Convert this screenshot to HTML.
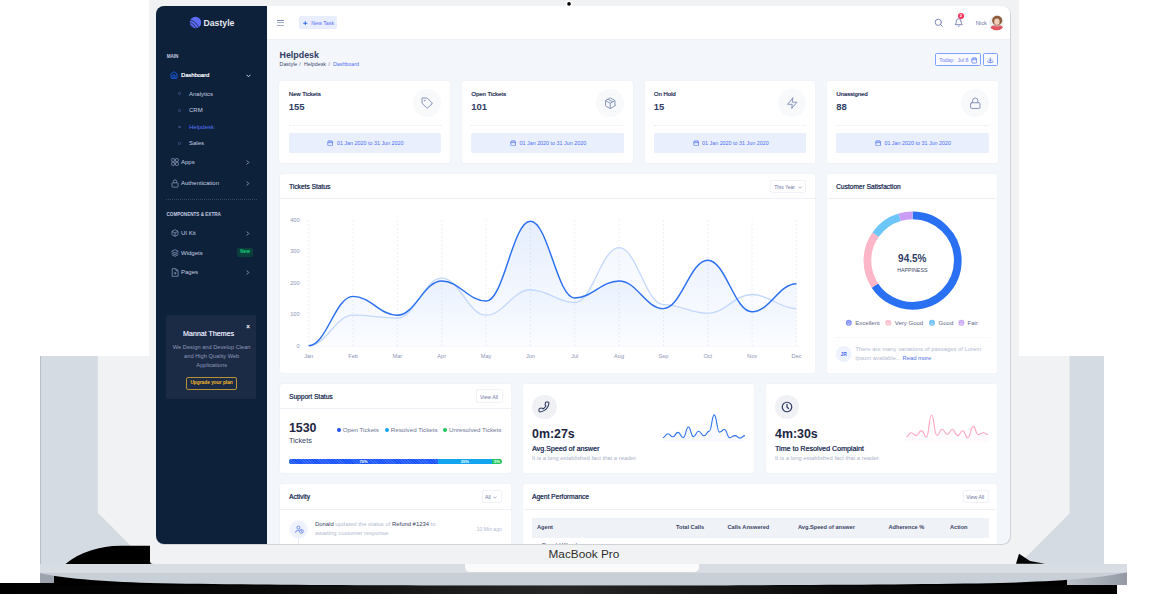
<!DOCTYPE html>
<html><head><meta charset="utf-8">
<style>
*{box-sizing:border-box;margin:0;padding:0}
html,body{width:1175px;height:594px;overflow:hidden;background:#fff}
body{position:relative;font-family:"Liberation Sans",sans-serif;color:#303e67}
.a{position:absolute}
.t{position:absolute;white-space:nowrap;line-height:1}
#scrb{position:absolute;left:155.5px;top:5.5px;width:855px;height:539px;border-radius:8.5px;background:#cfd3d8}
#screen{position:absolute;left:0;top:0;width:1175px;height:594px;clip-path:inset(6px 165px 50px 156px round 8px);background:#f3f6fa}
#side{position:absolute;left:156px;top:6px;width:111px;height:538px;background:#0d213a}
#top{position:absolute;left:267px;top:6px;width:743px;height:34px;background:#fff;border-bottom:1px solid #edf0f5}
.card{position:absolute;background:#fff;border-radius:2.5px;box-shadow:0 0 2px rgba(40,50,80,.06)}
</style></head><body>
<!-- laptop base -->
<svg class="a" style="left:0;top:0" width="1175" height="594" viewBox="0 0 1175 594">
  <rect x="149" y="0" width="870" height="356" fill="#f1f2f4"/>
  <rect x="40" y="356" width="1064" height="208" fill="#d5dbe2"/>
  <rect x="40" y="356" width="1" height="208" fill="#b9c0c8"/>
  <polygon points="97.8,356 1069.5,356 1069.5,513.5 1019,564 149,564 97.8,512.8" fill="#f1f2f4"/>
  <path d="M65.5,564 C80,552 100,546 120,545.8 L150,545.8 L150,561 Q150,564 153,564 Z" fill="#000"/>
  <path d="M1019,553.8 L1016,563.7 L1045,563.7 L1030,561 Z" fill="#000"/>
  <rect x="54" y="574" width="1013" height="12" fill="#000"/>
  <defs><linearGradient id="bk" x1="0" x2="1" y1="0" y2="0"><stop offset="0" stop-color="#000"/><stop offset="0.25" stop-color="#0a0a0a"/><stop offset="0.5" stop-color="#262626"/><stop offset="0.75" stop-color="#0a0a0a"/><stop offset="1" stop-color="#000"/></linearGradient></defs>
  <rect x="0" y="583" width="1117" height="11" fill="url(#bk)"/>
  <rect x="54" y="583" width="1013" height="2.5" fill="#000"/>
  <rect x="40" y="564" width="1087" height="8" fill="#d8dde3"/>
  <rect x="40" y="572" width="14" height="11" fill="#9ea4ad"/>
  <defs><linearGradient id="ft" x1="0" x2="1"><stop offset="0" stop-color="#bcc1c8"/><stop offset="1" stop-color="#949aa4"/></linearGradient></defs><rect x="1067" y="572" width="60" height="13" fill="url(#ft)"/>
  <path d="M40,572 L1127,572 C1105,577.5 1065,581 1000,583 C900,585 700,585.5 583,585.5 C400,585.5 250,585 150,583 C100,581.5 60,578 40,573 Z" fill="#c8cfd7"/>
  <rect x="40" y="571.6" width="1087" height="0.8" fill="#e3e7eb"/>
  <path d="M465,564 L699,564 L699,567 Q699,572 693,572 L471,572 Q465,572 465,567 Z" fill="#fbfbfc"/>
  <circle cx="569" cy="3.9" r="3" fill="#fff"/>
  <circle cx="569" cy="3.9" r="1.8" fill="#000"/>
</svg>
<div class="t" style="left:548.5px;top:548.5px;font-size:11.8px;color:#2a2a2a;text-shadow:0 0 2px #fff">MacBook Pro</div>

<div id="scrb"></div>
<div id="screen">
  <div id="side"></div>
  <svg class="a" style="left:189.1px;top:16.4px" width="13" height="13" viewBox="0 0 13 13">
    <defs><clipPath id="lg"><circle cx="6.5" cy="6.5" r="5.7"/></clipPath></defs>
    <circle cx="6.5" cy="6.5" r="5.7" fill="#5d6cf6"/>
    <g clip-path="url(#lg)" fill="none" stroke="#0d213a" stroke-width="0.75">
      <circle cx="-1" cy="15" r="6.22"/>
      <circle cx="-1" cy="15" r="8.57"/>
      <circle cx="-1" cy="15" r="11.23"/>
    </g>
  </svg>
  <div class="t" style="left:203.5px;top:18.6px;font-size:8.7px;font-weight:bold;color:#e6e9f0">Dastyle</div>
  <div class="t" style="left:166.7px;top:55px;font-size:4.6px;font-weight:bold;color:#c3cbe0">MAIN</div>
  <svg class="a" style="left:170.3px;top:71.3px" width="8" height="8" viewBox="0 0 24 24"><path d="M3 9l9-7 9 7v11a2 2 0 0 1-2 2H5a2 2 0 0 1-2-2z M9 22V12h6v10" fill="none" stroke="#1d63f6" stroke-width="2.6" stroke-linejoin="round"/></svg>
  <div class="t" style="left:181px;top:72.9px;font-size:5.75px;font-weight:normal;color:#eef1f8;text-shadow:0.3px 0 0 #eef1f8">Dashboard</div>
  <svg class="a" style="left:245.5px;top:73.5px" width="5" height="3.5" viewBox="0 0 10 7"><path d="M1 1.5 L5 5.5 L9 1.5" fill="none" stroke="#e3e7f1" stroke-width="1.8"/></svg>
  <div class="a" style="left:178.2px;top:92.4px;width:2.6px;height:2.6px;border:0.7px solid #3d4f86;border-radius:50%"></div>
  <div class="t" style="left:189px;top:90.9px;font-size:6px;color:#c6cde0">Analytics</div>
  <div class="a" style="left:178.2px;top:109px;width:2.6px;height:2.6px;border:0.7px solid #3d4f86;border-radius:50%"></div>
  <div class="t" style="left:189px;top:107.4px;font-size:6px;color:#c6cde0">CRM</div>
  <div class="a" style="left:178.2px;top:125.6px;width:2.6px;height:2.6px;border:0.7px solid #3d4f86;border-radius:50%"></div>
  <div class="t" style="left:189px;top:123.9px;font-size:6px;color:#5571f6">Helpdesk</div>
  <div class="a" style="left:178.2px;top:142px;width:2.6px;height:2.6px;border:0.7px solid #3d4f86;border-radius:50%"></div>
  <div class="t" style="left:189px;top:140.2px;font-size:6px;color:#c6cde0">Sales</div>
  <svg class="a" style="left:170.5px;top:158px" width="8" height="8" viewBox="0 0 24 24"><g fill="none" stroke="#8e9ac0" stroke-width="2.2"><rect x="2" y="2" width="8.5" height="8.5" rx="1.5"/><rect x="13.5" y="2" width="8.5" height="8.5" rx="1.5"/><rect x="2" y="13.5" width="8.5" height="8.5" rx="1.5"/><rect x="13.5" y="13.5" width="8.5" height="8.5" rx="1.5"/></g></svg>
  <div class="t" style="left:181px;top:159.2px;font-size:6px;color:#c6cde0">Apps</div>
  <svg class="a" style="left:246px;top:160px" width="3.5" height="5" viewBox="0 0 7 10"><path d="M1.5 1 L5.5 5 L1.5 9" fill="none" stroke="#aab3cc" stroke-width="1.6"/></svg>
  <svg class="a" style="left:170.5px;top:178.5px" width="8" height="9" viewBox="0 0 24 26"><g fill="none" stroke="#8e9ac0" stroke-width="2.2"><rect x="3" y="11" width="18" height="13" rx="2"/><path d="M7 11 V7 a5 5 0 0 1 10 0 V11"/></g></svg>
  <div class="t" style="left:181px;top:180.2px;font-size:6px;color:#c6cde0">Authentication</div>
  <svg class="a" style="left:246px;top:181px" width="3.5" height="5" viewBox="0 0 7 10"><path d="M1.5 1 L5.5 5 L1.5 9" fill="none" stroke="#aab3cc" stroke-width="1.6"/></svg>
  <div class="a" style="left:166px;top:199px;width:91px;height:0;border-top:0.7px dotted #34466a"></div>
  <div class="t" style="left:166.5px;top:212.6px;font-size:4.6px;font-weight:bold;color:#c3cbe0">COMPONENTS &amp; EXTRA</div>
  <svg class="a" style="left:170.5px;top:228.5px" width="8" height="8" viewBox="0 0 24 24"><g fill="none" stroke="#8e9ac0" stroke-width="2.2" stroke-linejoin="round"><path d="M12 2 L21 7 V17 L12 22 L3 17 V7 Z"/><path d="M3 7 L12 12 L21 7 M12 12 V22"/></g></svg>
  <div class="t" style="left:181px;top:229.8px;font-size:6px;color:#c6cde0">UI Kit</div>
  <svg class="a" style="left:246px;top:230.5px" width="3.5" height="5" viewBox="0 0 7 10"><path d="M1.5 1 L5.5 5 L1.5 9" fill="none" stroke="#aab3cc" stroke-width="1.6"/></svg>
  <svg class="a" style="left:170.5px;top:249px" width="8" height="8" viewBox="0 0 24 24"><g fill="none" stroke="#8e9ac0" stroke-width="2.2" stroke-linejoin="round"><path d="M12 2 L22 7 L12 12 L2 7 Z"/><path d="M2 12 L12 17 L22 12 M2 17 L12 22 L22 17"/></g></svg>
  <div class="t" style="left:181px;top:250.2px;font-size:6px;color:#c6cde0">Widgets</div>
  <div class="a" style="left:237.4px;top:248.2px;width:15.6px;height:8.7px;border-radius:2px;background:#0b3f3b"></div>
  <div class="t" style="left:240.2px;top:250.2px;font-size:4.7px;font-weight:bold;color:#14d17a">New</div>
  <svg class="a" style="left:170.5px;top:268px" width="8" height="9" viewBox="0 0 22 26"><g fill="none" stroke="#8e9ac0" stroke-width="2.2" stroke-linejoin="round"><path d="M3 2 H14 L20 8 V24 H3 Z"/><path d="M14 2 V8 H20 M8 15 H15 M11.5 11.5 V18.5"/></g></svg>
  <div class="t" style="left:181px;top:269.4px;font-size:6px;color:#c6cde0">Pages</div>
  <svg class="a" style="left:246px;top:270px" width="3.5" height="5" viewBox="0 0 7 10"><path d="M1.5 1 L5.5 5 L1.5 9" fill="none" stroke="#aab3cc" stroke-width="1.6"/></svg>
  <div class="a" style="left:166.3px;top:314.5px;width:90px;height:84px;border-radius:2px;background:#1b2b45"></div>
  <div class="t" style="left:246.2px;top:324.2px;font-size:6.3px;font-weight:bold;color:#fff">&#215;</div>
  <div class="t" style="left:182.9px;top:330.6px;font-size:7.1px;color:#d7dded;text-shadow:0.2px 0 0 #d7dded">Mannat Themes</div>
  <div class="a" style="left:166.3px;width:90px;text-align:center;top:343.2px;font-size:5.7px;line-height:9.1px;color:#8d99bb;margin-left:0.4px">We Design and Develop Clean<br>and High Quality Web<br>Applications</div>
  <div class="a" style="left:186.3px;top:376.6px;width:50.6px;height:13.6px;border:0.75px solid #b99436;border-radius:2px"></div>
  <div class="t" style="left:186.3px;width:50.6px;text-align:center;top:381.4px;font-size:4.8px;font-weight:bold;color:#f5b82a">Upgrade your plan</div>
  <div id="top"></div>
  <div class="a" style="left:276.8px;top:19.9px;width:7.4px;height:0.8px;background:#7d89b8"></div>
  <div class="a" style="left:276.8px;top:22.3px;width:7.4px;height:0.8px;background:#a3acca"></div>
  <div class="a" style="left:276.8px;top:24.9px;width:7.4px;height:0.8px;background:#a3acca"></div>
  <div class="a" style="left:299.3px;top:16.3px;width:37.7px;height:12.7px;border-radius:1.5px;background:#e8eefd"></div>
  <svg class="a" style="left:303px;top:20.6px" width="4.6" height="4.6" viewBox="0 0 10 10"><path d="M5 0.5V9.5M0.5 5H9.5" stroke="#2563eb" stroke-width="2"/></svg>
  <div class="t" style="left:311.2px;top:21px;font-size:5.3px;color:#5a6ff0">New Task</div>
  <svg class="a" style="left:934px;top:18.4px" width="9.4" height="9.4" viewBox="0 0 24 24"><g fill="none" stroke="#6b78ad" stroke-width="2.2" stroke-linecap="round"><circle cx="11" cy="11" r="8"/><path d="M21 21l-4.35-4.35"/></g></svg>
  <svg class="a" style="left:953.6px;top:18.4px" width="9.4" height="9.4" viewBox="0 0 24 24"><g fill="none" stroke="#6b78ad" stroke-width="2.2" stroke-linecap="round" stroke-linejoin="round"><path d="M18 8A6 6 0 0 0 6 8c0 7-3 9-3 9h18s-3-2-3-9"/><path d="M13.73 21a2 2 0 0 1-3.46 0"/></g></svg>
  <div class="a" style="left:958.3px;top:12.6px;width:6.2px;height:6.2px;border-radius:50%;background:#f5325c"></div>
  <div class="t" style="left:959.8px;top:13.6px;font-size:4px;font-weight:bold;color:#fff">2</div>
  <div class="t" style="left:975.7px;top:20.6px;font-size:5.8px;color:#6d78a6">Nick</div>
  <svg class="a" style="left:988.6px;top:15.4px" width="15.4" height="15.4" viewBox="0 0 20 20">
    <defs><clipPath id="av"><circle cx="10" cy="10" r="10"/></clipPath></defs>
    <g clip-path="url(#av)"><rect width="20" height="20" fill="#eef0f2"/>
    <ellipse cx="10.6" cy="7.3" rx="6.6" ry="6.3" fill="#8e5d3e"/>
    <path d="M0.5 20 Q0.5 13.6 10 12.8 Q19.5 13.6 19.5 20Z" fill="#e05560"/>
    <path d="M5.8 13.4 Q10 15.6 14.2 13.4" fill="none" stroke="#c9c9cc" stroke-width="1.1"/>
    <ellipse cx="10.3" cy="8.8" rx="3.5" ry="4.1" fill="#efcdb6"/></g>
  </svg>
  <div class="t" style="left:279.5px;top:51.2px;font-size:8.9px;font-weight:bold;color:#2f3b63">Helpdesk</div>
  <div class="t" style="left:279.6px;top:61.6px;font-size:5.3px;color:#3f4a70">Dastyle</div><div class="t" style="left:299.3px;top:61.6px;font-size:5.3px;color:#6c7595">/</div><div class="t" style="left:303.9px;top:61.6px;font-size:5.3px;color:#3f4a70">Helpdesk</div><div class="t" style="left:328.6px;top:61.6px;font-size:5.3px;color:#6c7595">/</div><div class="t" style="left:333px;top:61.6px;font-size:5.3px;color:#4f6ff5">Dashboard</div>
  <div class="a" style="left:935.2px;top:53.1px;width:46.2px;height:13.4px;border:0.7px solid #7ea1fb;border-radius:1.5px;background:#f8faff"></div>
  <div class="t" style="left:939.3px;top:57.9px;font-size:5.2px;color:#6e7ff3">Today:&nbsp; Jul 8</div>
  <svg class="a" style="left:970.5px;top:57px" width="6.6" height="6.6" viewBox="0 0 24 24"><g fill="none" stroke="#4e6ff5" stroke-width="2.6" stroke-linejoin="round"><rect x="3" y="4" width="18" height="18" rx="4"/><path d="M3 10h18M8 2v4M16 2v4"/></g></svg>
  <div class="a" style="left:983.3px;top:53.1px;width:14.3px;height:13.4px;border:0.7px solid #7ea1fb;border-radius:1.5px;background:#f8faff"></div>
  <svg class="a" style="left:987.3px;top:56.6px" width="6.6" height="6.6" viewBox="0 0 24 24"><g fill="none" stroke="#4e6ff5" stroke-width="2.8" stroke-linecap="round" stroke-linejoin="round"><path d="M3 15v2a3 3 0 0 0 3 3h12a3 3 0 0 0 3-3v-2M7 10l5 5 5-5M12 15V3"/></g></svg>
  <div class="card" style="left:279.4px;top:80.7px;width:170.7px;height:82.2px"></div>
  <div class="t" style="left:288.7px;top:91.8px;font-size:5.95px;font-weight:normal;color:#2f3a5e;text-shadow:0.3px 0 0 #2f3a5e">New Tickets</div>
  <div class="t" style="left:288.7px;top:102.4px;font-size:9.5px;font-weight:bold;color:#303e67">155</div>
  <div class="a" style="left:413.2px;top:89.3px;width:28.2px;height:28.2px;border-radius:50%;background:#f8f9fb"></div>
  <svg class="a" style="left:421.09999999999997px;top:97.2px" width="12.5" height="12.5" viewBox="0 0 24 24"><g fill="none" stroke="#8793b8" stroke-width="1.9" stroke-linecap="round" stroke-linejoin="round"><path d="M20.59 13.41l-7.17 7.17a2 2 0 0 1-2.83 0L2 12V2h10l8.59 8.59a2 2 0 0 1 0 2.82z"/><circle cx="7" cy="7" r="0.5"/></g></svg>
  <div class="a" style="left:288.7px;top:124.8px;width:152.7px;border-top:0.6px dotted #e6e9ef"></div>
  <div class="a" style="left:288.7px;top:133.1px;width:152.7px;height:20.4px;border-radius:1.5px;background:#e9effd"></div>
  <svg class="a" style="left:327.4px;top:140px" width="6.3" height="6.3" viewBox="0 0 24 24"><g fill="none" stroke="#4e6ff5" stroke-width="2.6" stroke-linejoin="round"><rect x="3" y="4" width="18" height="18" rx="3"/><path d="M3 10h18M8 2v4M16 2v4"/></g></svg>
  <div class="t" style="left:336.9px;top:140.9px;font-size:5.38px;color:#4e6ff5">01 Jan 2020 to 31 Jun 2020</div>
  <div class="card" style="left:462px;top:80.7px;width:170.7px;height:82.2px"></div>
  <div class="t" style="left:471.3px;top:91.8px;font-size:5.95px;font-weight:normal;color:#2f3a5e;text-shadow:0.3px 0 0 #2f3a5e">Open Tickets</div>
  <div class="t" style="left:471.3px;top:102.4px;font-size:9.5px;font-weight:bold;color:#303e67">101</div>
  <div class="a" style="left:595.8px;top:89.3px;width:28.2px;height:28.2px;border-radius:50%;background:#f8f9fb"></div>
  <svg class="a" style="left:603.7px;top:97.2px" width="12.5" height="12.5" viewBox="0 0 24 24"><g fill="none" stroke="#8793b8" stroke-width="1.9" stroke-linecap="round" stroke-linejoin="round"><path d="M21 16V8a2 2 0 0 0-1-1.73l-7-4a2 2 0 0 0-2 0l-7 4A2 2 0 0 0 3 8v8a2 2 0 0 0 1 1.73l7 4a2 2 0 0 0 2 0l7-4A2 2 0 0 0 21 16z"/><path d="M3.27 6.96L12 12.01l8.73-5.05M12 22.08V12M16.5 9.4L7.5 4.21"/></g></svg>
  <div class="a" style="left:471.3px;top:124.8px;width:152.7px;border-top:0.6px dotted #e6e9ef"></div>
  <div class="a" style="left:471.3px;top:133.1px;width:152.7px;height:20.4px;border-radius:1.5px;background:#e9effd"></div>
  <svg class="a" style="left:510px;top:140px" width="6.3" height="6.3" viewBox="0 0 24 24"><g fill="none" stroke="#4e6ff5" stroke-width="2.6" stroke-linejoin="round"><rect x="3" y="4" width="18" height="18" rx="3"/><path d="M3 10h18M8 2v4M16 2v4"/></g></svg>
  <div class="t" style="left:519.5px;top:140.9px;font-size:5.38px;color:#4e6ff5">01 Jan 2020 to 31 Jun 2020</div>
  <div class="card" style="left:644.5px;top:80.7px;width:170.7px;height:82.2px"></div>
  <div class="t" style="left:653.8px;top:91.8px;font-size:5.95px;font-weight:normal;color:#2f3a5e;text-shadow:0.3px 0 0 #2f3a5e">On Hold</div>
  <div class="t" style="left:653.8px;top:102.4px;font-size:9.5px;font-weight:bold;color:#303e67">15</div>
  <div class="a" style="left:778.3px;top:89.3px;width:28.2px;height:28.2px;border-radius:50%;background:#f8f9fb"></div>
  <svg class="a" style="left:786.2px;top:97.2px" width="12.5" height="12.5" viewBox="0 0 24 24"><g fill="none" stroke="#8793b8" stroke-width="1.9" stroke-linecap="round" stroke-linejoin="round"><path d="M13 2L3 14h9l-1 8 10-12h-9l1-8z"/></g></svg>
  <div class="a" style="left:653.8px;top:124.8px;width:152.7px;border-top:0.6px dotted #e6e9ef"></div>
  <div class="a" style="left:653.8px;top:133.1px;width:152.7px;height:20.4px;border-radius:1.5px;background:#e9effd"></div>
  <svg class="a" style="left:692.5px;top:140px" width="6.3" height="6.3" viewBox="0 0 24 24"><g fill="none" stroke="#4e6ff5" stroke-width="2.6" stroke-linejoin="round"><rect x="3" y="4" width="18" height="18" rx="3"/><path d="M3 10h18M8 2v4M16 2v4"/></g></svg>
  <div class="t" style="left:702.0px;top:140.9px;font-size:5.38px;color:#4e6ff5">01 Jan 2020 to 31 Jun 2020</div>
  <div class="card" style="left:826.9px;top:80.7px;width:170.7px;height:82.2px"></div>
  <div class="t" style="left:836.1999999999999px;top:91.8px;font-size:5.95px;font-weight:normal;color:#2f3a5e;text-shadow:0.3px 0 0 #2f3a5e">Unassigned</div>
  <div class="t" style="left:836.1999999999999px;top:102.4px;font-size:9.5px;font-weight:bold;color:#303e67">88</div>
  <div class="a" style="left:960.7px;top:89.3px;width:28.2px;height:28.2px;border-radius:50%;background:#f8f9fb"></div>
  <svg class="a" style="left:968.5999999999999px;top:97.2px" width="12.5" height="12.5" viewBox="0 0 24 24"><g fill="none" stroke="#8793b8" stroke-width="1.9" stroke-linecap="round" stroke-linejoin="round"><rect x="3" y="11" width="18" height="11" rx="2"/><path d="M7 11V7a5 5 0 0 1 10 0v4"/></g></svg>
  <div class="a" style="left:836.1999999999999px;top:124.8px;width:152.7px;border-top:0.6px dotted #e6e9ef"></div>
  <div class="a" style="left:836.1999999999999px;top:133.1px;width:152.7px;height:20.4px;border-radius:1.5px;background:#e9effd"></div>
  <svg class="a" style="left:874.9px;top:140px" width="6.3" height="6.3" viewBox="0 0 24 24"><g fill="none" stroke="#4e6ff5" stroke-width="2.6" stroke-linejoin="round"><rect x="3" y="4" width="18" height="18" rx="3"/><path d="M3 10h18M8 2v4M16 2v4"/></g></svg>
  <div class="t" style="left:884.4px;top:140.9px;font-size:5.38px;color:#4e6ff5">01 Jan 2020 to 31 Jun 2020</div>
  <div class="card" style="left:279.8px;top:174px;width:535.2px;height:198.6px"></div>
  <div class="t" style="left:289px;top:183.8px;font-size:6.6px;font-weight:normal;color:#2f3a5e;text-shadow:0.3px 0 0 #2f3a5e">Tickets Status</div>
  <div class="a" style="left:279.8px;top:197.9px;width:535.2px;height:0.7px;background:#eef1f5"></div>
  <div class="a" style="left:770px;top:180px;width:36px;height:13px;border:0.7px solid #f0f2f8;border-radius:2px"></div>
  <div class="t" style="left:774.2px;top:185.2px;font-size:5px;color:#6d78a6">This Year</div>
  <svg class="a" style="left:797.5px;top:185.5px" width="4" height="3" viewBox="0 0 8 6"><path d="M1 1.2 L4 4.5 L7 1.2" fill="none" stroke="#6d78a6" stroke-width="1.2"/></svg>
  <svg class="a" style="left:0;top:0" width="1175" height="594">
    <defs>
      <linearGradient id="g1" x1="0" y1="220" x2="0" y2="346" gradientUnits="userSpaceOnUse"><stop offset="0" stop-color="#2a6ff0" stop-opacity="0.12"/><stop offset="1" stop-color="#2a6ff0" stop-opacity="0.01"/></linearGradient>
      <linearGradient id="g2" x1="0" y1="220" x2="0" y2="346" gradientUnits="userSpaceOnUse"><stop offset="0" stop-color="#8bb6f8" stop-opacity="0.12"/><stop offset="1" stop-color="#8bb6f8" stop-opacity="0.01"/></linearGradient>
    </defs>
    <line x1="308.70" y1="220" x2="308.70" y2="346" stroke="#e1e5ec" stroke-width="0.6" stroke-dasharray="2 2"/><line x1="353.04" y1="220" x2="353.04" y2="346" stroke="#e1e5ec" stroke-width="0.6" stroke-dasharray="2 2"/><line x1="397.38" y1="220" x2="397.38" y2="346" stroke="#e1e5ec" stroke-width="0.6" stroke-dasharray="2 2"/><line x1="441.72" y1="220" x2="441.72" y2="346" stroke="#e1e5ec" stroke-width="0.6" stroke-dasharray="2 2"/><line x1="486.06" y1="220" x2="486.06" y2="346" stroke="#e1e5ec" stroke-width="0.6" stroke-dasharray="2 2"/><line x1="530.40" y1="220" x2="530.40" y2="346" stroke="#e1e5ec" stroke-width="0.6" stroke-dasharray="2 2"/><line x1="574.74" y1="220" x2="574.74" y2="346" stroke="#e1e5ec" stroke-width="0.6" stroke-dasharray="2 2"/><line x1="619.08" y1="220" x2="619.08" y2="346" stroke="#e1e5ec" stroke-width="0.6" stroke-dasharray="2 2"/><line x1="663.42" y1="220" x2="663.42" y2="346" stroke="#e1e5ec" stroke-width="0.6" stroke-dasharray="2 2"/><line x1="707.76" y1="220" x2="707.76" y2="346" stroke="#e1e5ec" stroke-width="0.6" stroke-dasharray="2 2"/><line x1="752.10" y1="220" x2="752.10" y2="346" stroke="#e1e5ec" stroke-width="0.6" stroke-dasharray="2 2"/><line x1="796.44" y1="220" x2="796.44" y2="346" stroke="#e1e5ec" stroke-width="0.6" stroke-dasharray="2 2"/>
    <line x1="305" y1="346.3" x2="800" y2="346.3" stroke="#eef0f4" stroke-width="0.6"/>
    <g font-family="Liberation Sans" font-size="5.6" fill="#8a94b5"><text x="299.5" y="347.50" text-anchor="end">0</text><text x="299.5" y="316.07" text-anchor="end">100</text><text x="299.5" y="284.65" text-anchor="end">200</text><text x="299.5" y="253.22" text-anchor="end">300</text><text x="299.5" y="221.80" text-anchor="end">400</text><text x="308.70" y="357.6" text-anchor="middle">Jan</text><text x="353.04" y="357.6" text-anchor="middle">Feb</text><text x="397.38" y="357.6" text-anchor="middle">Mar</text><text x="441.72" y="357.6" text-anchor="middle">Apr</text><text x="486.06" y="357.6" text-anchor="middle">May</text><text x="530.40" y="357.6" text-anchor="middle">Jun</text><text x="574.74" y="357.6" text-anchor="middle">Jul</text><text x="619.08" y="357.6" text-anchor="middle">Aug</text><text x="663.42" y="357.6" text-anchor="middle">Sep</text><text x="707.76" y="357.6" text-anchor="middle">Oct</text><text x="752.10" y="357.6" text-anchor="middle">Nov</text><text x="796.44" y="357.6" text-anchor="middle">Dec</text></g>
    <path d="M308.70,345.70 C326.44,345.70 335.30,315.22 353.04,315.22 C370.78,315.22 379.64,318.05 397.38,318.05 C415.12,318.05 423.98,278.14 441.72,278.14 C459.46,278.14 468.32,315.22 486.06,315.22 C503.80,315.22 512.66,289.76 530.40,289.76 C548.14,289.76 557.00,302.65 574.74,302.65 C592.48,302.65 601.34,247.65 619.08,247.65 C636.82,247.65 645.68,304.53 663.42,304.53 C681.16,304.53 690.02,313.33 707.76,313.33 C725.50,313.33 734.36,294.48 752.10,294.48 C769.84,294.48 778.70,308.62 796.44,308.62 L796.44,346 L308.7,346 Z" fill="url(#g2)"/>
    <path d="M308.70,345.70 C326.44,345.70 335.30,296.36 353.04,296.36 C370.78,296.36 379.64,315.22 397.38,315.22 C415.12,315.22 423.98,280.96 441.72,280.96 C459.46,280.96 468.32,301.08 486.06,301.08 C503.80,301.08 512.66,221.26 530.40,221.26 C548.14,221.26 557.00,297.93 574.74,297.93 C592.48,297.93 601.34,280.96 619.08,280.96 C636.82,280.96 645.68,308.62 663.42,308.62 C681.16,308.62 690.02,260.22 707.76,260.22 C725.50,260.22 734.36,311.76 752.10,311.76 C769.84,311.76 778.70,283.79 796.44,283.79 L796.44,346 L308.7,346 Z" fill="url(#g1)"/>
    <path d="M308.70,345.70 C326.44,345.70 335.30,315.22 353.04,315.22 C370.78,315.22 379.64,318.05 397.38,318.05 C415.12,318.05 423.98,278.14 441.72,278.14 C459.46,278.14 468.32,315.22 486.06,315.22 C503.80,315.22 512.66,289.76 530.40,289.76 C548.14,289.76 557.00,302.65 574.74,302.65 C592.48,302.65 601.34,247.65 619.08,247.65 C636.82,247.65 645.68,304.53 663.42,304.53 C681.16,304.53 690.02,313.33 707.76,313.33 C725.50,313.33 734.36,294.48 752.10,294.48 C769.84,294.48 778.70,308.62 796.44,308.62" fill="none" stroke="#c3d8fb" stroke-width="1.3"/>
    <path d="M308.70,345.70 C326.44,345.70 335.30,296.36 353.04,296.36 C370.78,296.36 379.64,315.22 397.38,315.22 C415.12,315.22 423.98,280.96 441.72,280.96 C459.46,280.96 468.32,301.08 486.06,301.08 C503.80,301.08 512.66,221.26 530.40,221.26 C548.14,221.26 557.00,297.93 574.74,297.93 C592.48,297.93 601.34,280.96 619.08,280.96 C636.82,280.96 645.68,308.62 663.42,308.62 C681.16,308.62 690.02,260.22 707.76,260.22 C725.50,260.22 734.36,311.76 752.10,311.76 C769.84,311.76 778.70,283.79 796.44,283.79" fill="none" stroke="#2a6ff0" stroke-width="1.45"/>
  </svg>
  <div class="card" style="left:826.5px;top:174px;width:170.8px;height:198.6px"></div>
  <div class="t" style="left:836px;top:183.8px;font-size:6.6px;font-weight:normal;color:#2f3a5e;text-shadow:0.3px 0 0 #2f3a5e">Customer Satisfaction</div>
  <div class="a" style="left:826.5px;top:197.9px;width:170.8px;height:0.7px;background:#eef1f5"></div>
  <svg class="a" style="left:0;top:0" width="1175" height="594">
    <circle cx="912.6" cy="260.6" r="45.2" fill="none" stroke="#2a70f2" stroke-width="7.7" stroke-dasharray="186.30 284.00" stroke-dashoffset="0.00" transform="rotate(-90 912.6 260.6)"/><circle cx="912.6" cy="260.6" r="45.2" fill="none" stroke="#fdb5c8" stroke-width="7.7" stroke-dasharray="53.96 284.00" stroke-dashoffset="-186.30" transform="rotate(-90 912.6 260.6)"/><circle cx="912.6" cy="260.6" r="45.2" fill="none" stroke="#6cc6f9" stroke-width="7.7" stroke-dasharray="30.10 284.00" stroke-dashoffset="-240.26" transform="rotate(-90 912.6 260.6)"/><circle cx="912.6" cy="260.6" r="45.2" fill="none" stroke="#c99cf5" stroke-width="7.7" stroke-dasharray="13.63 284.00" stroke-dashoffset="-270.37" transform="rotate(-90 912.6 260.6)"/>
    <text x="912.3" y="261.6" text-anchor="middle" font-family="Liberation Sans" font-size="10" font-weight="bold" fill="#303e67">94.5%</text>
    <text x="912.3" y="272.2" text-anchor="middle" font-family="Liberation Sans" font-size="5.3" fill="#3b4566">HAPPINESS</text>
    <g font-family="Liberation Sans" font-size="6" fill="#5f6888"><circle cx="848.8" cy="322.7" r="3" fill="#6d81f5" fill-opacity="0.85"/><path d="M847.4,323.3 Q848.8,325 850.1999999999999,323.3" fill="none" stroke="#fff" stroke-width="0.6"/><path d="M847.5999999999999,321.6 L848.1999999999999,321.6 M849.4,321.6 L850.0,321.6" stroke="#fff" stroke-width="0.5"/><text x="855.3" y="324.9">Excellent</text><circle cx="888.3" cy="322.7" r="3" fill="#fbb5c6" fill-opacity="0.85"/><path d="M886.9,323.3 Q888.3,325 889.6999999999999,323.3" fill="none" stroke="#fff" stroke-width="0.6"/><path d="M887.0999999999999,321.6 L887.6999999999999,321.6 M888.9,321.6 L889.5,321.6" stroke="#fff" stroke-width="0.5"/><text x="894.8" y="324.9">Very Good</text><circle cx="932.0" cy="322.7" r="3" fill="#5bb5f0" fill-opacity="0.85"/><path d="M930.6,323.3 Q932.0,325 933.4,323.3" fill="none" stroke="#fff" stroke-width="0.6"/><path d="M930.8,321.6 L931.4,321.6 M932.6,321.6 L933.2,321.6" stroke="#fff" stroke-width="0.5"/><text x="938.6" y="324.9">Good</text><circle cx="961.4" cy="322.7" r="3" fill="#c49bf2" fill-opacity="0.85"/><path d="M960.0,323.3 Q961.4,325 962.8,323.3" fill="none" stroke="#fff" stroke-width="0.6"/><path d="M960.1999999999999,321.6 L960.8,321.6 M962.0,321.6 L962.6,321.6" stroke="#fff" stroke-width="0.5"/><text x="967.6" y="324.9">Fair</text></g>
    <line x1="835" y1="337.5" x2="990" y2="337.5" stroke="#e3e6ec" stroke-width="0.6" stroke-dasharray="0.8 1.2"/>
    <circle cx="843.7" cy="354.1" r="8" fill="#eef2fd"/>
    <text x="843.7" y="356" text-anchor="middle" font-family="Liberation Sans" font-size="5" font-weight="bold" fill="#4e6ff5">JR</text>
    <g font-family="Liberation Sans" font-size="5.85" fill="#b3bbd2"><text x="855.3" y="351.3">There are many variations of passages of Lorem</text><text x="855.3" y="359.8">Ipsum available... <tspan fill="#4f6ff5">Read more</tspan></text></g>
  </svg>
  <div class="card" style="left:279.6px;top:384px;width:231.4px;height:88.9px"></div>
  <div class="t" style="left:289px;top:393.8px;font-size:6.6px;font-weight:normal;color:#2f3a5e;text-shadow:0.3px 0 0 #2f3a5e">Support Status</div>
  <div class="a" style="left:476.2px;top:389.4px;width:26.4px;height:13.2px;border:0.7px solid #f0f2f8;border-radius:2px"></div>
  <div class="t" style="left:479.9px;top:394.9px;font-size:5.2px;color:#6d78a6">View All</div>
  <div class="a" style="left:279.6px;top:408.2px;width:231.4px;height:0.7px;background:#eef1f5"></div>
  <div class="t" style="left:288.9px;top:421.9px;font-size:12.4px;font-weight:bold;color:#1c2541">1530</div>
  <div class="t" style="left:289px;top:436.5px;font-size:7.3px;color:#3a4466">Tickets</div>
  <div class="a" style="left:336.7px;top:428.1px;width:4px;height:4px;border-radius:50%;background:#1e4ff5"></div>
  <div class="t" style="left:342.8px;top:427px;font-size:6.2px;color:#6c7595">Open Tickets</div>
  <div class="a" style="left:384.8px;top:428.1px;width:4px;height:4px;border-radius:50%;background:#12a4ed"></div>
  <div class="t" style="left:390.8px;top:427px;font-size:6.2px;color:#6c7595">Resolved Tickets</div>
  <div class="a" style="left:443.2px;top:428.1px;width:4px;height:4px;border-radius:50%;background:#22c55e"></div>
  <div class="t" style="left:449.1px;top:427px;font-size:6.2px;color:#6c7595">Unresolved Tickets</div>
  <div class="a" style="left:289px;top:459.3px;width:213.3px;height:4.6px;border-radius:2.3px;overflow:hidden;background:#22c55e">
    <div class="a" style="left:0;top:0;width:149.1px;height:4.6px;background:#1652f8;background-image:repeating-linear-gradient(45deg,rgba(255,255,255,.15) 0 1px,transparent 1px 2px)"></div>
    <div class="a" style="left:149.1px;top:0;width:53.9px;height:4.6px;background:#12a4ed"></div>
  </div>
  <div class="t" style="left:359.4px;top:460px;font-size:4.1px;font-weight:bold;color:#fff">70%</div>
  <div class="t" style="left:460.8px;top:460px;font-size:4.1px;font-weight:bold;color:#fff">25%</div>
  <div class="t" style="left:494px;top:460px;font-size:4.1px;font-weight:bold;color:#fff">5%</div>

  <div class="card" style="left:523px;top:384px;width:231px;height:88.9px"></div>
  <div class="a" style="left:531.8px;top:394.5px;width:24.9px;height:24.9px;border-radius:50%;background:#eff1f5"></div>
  <svg class="a" style="left:538.2px;top:401.2px" width="12" height="12" viewBox="0 0 24 24"><path d="M22 16.92v3a2 2 0 0 1-2.18 2 19.79 19.79 0 0 1-8.63-3.07 19.5 19.5 0 0 1-6-6 19.79 19.79 0 0 1-3.07-8.67A2 2 0 0 1 4.11 2h3a2 2 0 0 1 2 1.72 12.84 12.84 0 0 0 .7 2.81 2 2 0 0 1-.45 2.11L8.09 9.91a16 16 0 0 0 6 6l1.27-1.27a2 2 0 0 1 2.11-.45 12.84 12.84 0 0 0 2.81.7A2 2 0 0 1 22 16.92z" fill="none" stroke="#2f3b63" stroke-width="2.1" stroke-linejoin="round" transform="translate(24 0) scale(-1 1)"/></svg>
  <div class="t" style="left:532px;top:428.2px;font-size:12.4px;font-weight:bold;color:#1c2541">0m:27s</div>
  <div class="t" style="left:532px;top:446.4px;font-size:7.1px;color:#2f3a5e;text-shadow:0.2px 0 0 #2f3a5e">Avg.Speed of answer</div>
  <div class="t" style="left:532px;top:455.8px;font-size:5.85px;color:#a9b1c7">It is a long established fact that a reader.</div>

  <div class="card" style="left:766px;top:384px;width:231.2px;height:88.9px"></div>
  <div class="a" style="left:774.6px;top:394.5px;width:24.9px;height:24.9px;border-radius:50%;background:#eff1f5"></div>
  <svg class="a" style="left:781px;top:401px" width="12" height="12" viewBox="0 0 24 24"><g fill="none" stroke="#2f3b63" stroke-width="2.4" stroke-linecap="round"><circle cx="12" cy="12" r="9.5"/><path d="M12 6.5V12l3 3"/></g></svg>
  <div class="t" style="left:775px;top:428.2px;font-size:12.4px;font-weight:bold;color:#1c2541">4m:30s</div>
  <div class="t" style="left:775px;top:446.4px;font-size:7.1px;color:#2f3a5e;text-shadow:0.2px 0 0 #2f3a5e">Time to Resolved Complaint</div>
  <div class="t" style="left:775px;top:455.8px;font-size:5.85px;color:#a9b1c7">It is a long established fact that a reader.</div>
  <svg class="a" style="left:0;top:0" width="1175" height="594">
    <path d="M662.9,437.6 C665.35,437.6 665.35,433.8 667.8,433.8 C670.35,433.8 670.35,436.8 672.9,436.8 C675.45,436.8 675.45,432.4 678,432.4 C680.60,432.4 680.60,437.6 683.2,437.6 C685.80,437.6 685.80,427 688.4,427 C690.90,427 690.90,436.6 693.4,436.6 C696.00,436.6 696.00,431.3 698.6,431.3 C701.30,431.3 701.30,435.8 704,435.8 C706.65,435.8 706.65,431.1 709.3,431.1 C711.75,431.1 711.75,414.9 714.2,414.9 C716.85,414.9 716.85,432.1 719.5,432.1 C721.95,432.1 721.95,429.5 724.4,429.5 C727.05,429.5 727.05,437.6 729.7,437.6 C732.30,437.6 732.30,435.6 734.9,435.6 C737.50,435.6 737.50,438.1 740.1,438.1 C742.50,438.1 742.50,435.6 744.9,435.6 L744.9,442 L662.9,442 Z" fill="#2a6ff0" fill-opacity="0.03"/>
    <path d="M662.9,437.6 C665.35,437.6 665.35,433.8 667.8,433.8 C670.35,433.8 670.35,436.8 672.9,436.8 C675.45,436.8 675.45,432.4 678,432.4 C680.60,432.4 680.60,437.6 683.2,437.6 C685.80,437.6 685.80,427 688.4,427 C690.90,427 690.90,436.6 693.4,436.6 C696.00,436.6 696.00,431.3 698.6,431.3 C701.30,431.3 701.30,435.8 704,435.8 C706.65,435.8 706.65,431.1 709.3,431.1 C711.75,431.1 711.75,414.9 714.2,414.9 C716.85,414.9 716.85,432.1 719.5,432.1 C721.95,432.1 721.95,429.5 724.4,429.5 C727.05,429.5 727.05,437.6 729.7,437.6 C732.30,437.6 732.30,435.6 734.9,435.6 C737.50,435.6 737.50,438.1 740.1,438.1 C742.50,438.1 742.50,435.6 744.9,435.6" fill="none" stroke="#2a6ff0" stroke-width="1.1"/>
    <path d="M906.3,436.8 C908.65,436.8 908.65,432.7 911,432.7 C913.65,432.7 913.65,435.6 916.3,435.6 C918.85,435.6 918.85,430.6 921.4,430.6 C923.90,430.6 923.90,436.8 926.4,436.8 C929.00,436.8 929.00,415 931.6,415 C934.20,415 934.20,435.4 936.8,435.4 C939.45,435.4 939.45,429.3 942.1,429.3 C944.70,429.3 944.70,434.5 947.3,434.5 C949.80,434.5 949.80,429.3 952.3,429.3 C954.95,429.3 954.95,435.6 957.6,435.6 C960.15,435.6 960.15,430.7 962.7,430.7 C965.30,430.7 965.30,437.8 967.9,437.8 C970.50,437.8 970.50,426.4 973.1,426.4 C975.60,426.4 975.60,434.5 978.1,434.5 C980.75,434.5 980.75,432.7 983.4,432.7 C985.75,432.7 985.75,434.6 988.1,434.6 L988.1,442 L906.3,442 Z" fill="#fca5bd" fill-opacity="0.05"/>
    <path d="M906.3,436.8 C908.65,436.8 908.65,432.7 911,432.7 C913.65,432.7 913.65,435.6 916.3,435.6 C918.85,435.6 918.85,430.6 921.4,430.6 C923.90,430.6 923.90,436.8 926.4,436.8 C929.00,436.8 929.00,415 931.6,415 C934.20,415 934.20,435.4 936.8,435.4 C939.45,435.4 939.45,429.3 942.1,429.3 C944.70,429.3 944.70,434.5 947.3,434.5 C949.80,434.5 949.80,429.3 952.3,429.3 C954.95,429.3 954.95,435.6 957.6,435.6 C960.15,435.6 960.15,430.7 962.7,430.7 C965.30,430.7 965.30,437.8 967.9,437.8 C970.50,437.8 970.50,426.4 973.1,426.4 C975.60,426.4 975.60,434.5 978.1,434.5 C980.75,434.5 980.75,432.7 983.4,432.7 C985.75,432.7 985.75,434.6 988.1,434.6" fill="none" stroke="#fca5bd" stroke-width="1.1"/>
  </svg>

  <div class="card" style="left:279.6px;top:484.1px;width:231.4px;height:80px"></div>
  <div class="t" style="left:289px;top:493.9px;font-size:6.6px;font-weight:normal;color:#2f3a5e;text-shadow:0.3px 0 0 #2f3a5e">Activity</div>
  <div class="a" style="left:481.7px;top:490.3px;width:20.8px;height:13px;border:0.7px solid #f0f2f8;border-radius:2px"></div>
  <div class="t" style="left:485px;top:494.6px;font-size:5.2px;color:#6d78a6">All</div>
  <svg class="a" style="left:493px;top:496px" width="4" height="3" viewBox="0 0 8 6"><path d="M1 1.2 L4 4.5 L7 1.2" fill="none" stroke="#6d78a6" stroke-width="1.2"/></svg>
  <div class="a" style="left:279.6px;top:508.8px;width:231.4px;height:0.7px;background:#eef1f5"></div>
  <div class="a" style="left:290.2px;top:521.4px;width:17px;height:17px;border-radius:50%;background:#eef2fd;box-shadow:0 0 0 1px #f6f8fe"></div>
  <svg class="a" style="left:294.5px;top:525.3px" width="9" height="9" viewBox="0 0 24 24"><g fill="none" stroke="#4e6ff5" stroke-width="2"><circle cx="9" cy="7" r="4"/><path d="M2 21v-2a4 4 0 0 1 4-4h5"/><circle cx="17" cy="17" r="5"/><path d="M17 14.5V17l1.5 1.5"/></g></svg>
  <div class="t" style="left:315px;top:522.3px;font-size:5.9px;color:#b3bbd2"><span style="color:#3a4466">Donald</span> updated the status of <span style="color:#3a4466">Refund #1234</span> to</div>
  <div class="t" style="left:315px;top:531px;font-size:5.9px;color:#b3bbd2">awaiting customer response</div>
  <div class="t" style="left:476.8px;top:526.8px;font-size:5.05px;color:#b3bbd2">10 Min ago</div>

  <div class="card" style="left:523px;top:484.1px;width:474.2px;height:80px"></div>
  <div class="t" style="left:532px;top:493.9px;font-size:6.6px;font-weight:normal;color:#2f3a5e;text-shadow:0.3px 0 0 #2f3a5e">Agent Performance</div>
  <div class="a" style="left:962.6px;top:490.3px;width:26.1px;height:13px;border:0.7px solid #f0f2f8;border-radius:2px"></div>
  <div class="t" style="left:966.2px;top:495px;font-size:5.2px;color:#6d78a6">View All</div>
  <div class="a" style="left:523px;top:508.8px;width:474.2px;height:0.7px;background:#eef1f5"></div>
  <div class="a" style="left:532px;top:518px;width:456.7px;height:19.8px;background:#eff2f7"></div>
  <div class="t" style="left:537px;top:524.9px;font-size:5.65px;font-weight:bold;color:#3a4466">Agent</div>
  <div class="t" style="left:676px;top:524.9px;font-size:5.65px;font-weight:bold;color:#3a4466">Total Calls</div>
  <div class="t" style="left:727.5px;top:524.9px;font-size:5.65px;font-weight:bold;color:#3a4466">Calls Answered</div>
  <div class="t" style="left:798px;top:524.9px;font-size:5.65px;font-weight:bold;color:#3a4466">Avg.Speed of answer</div>
  <div class="t" style="left:888.5px;top:524.9px;font-size:5.65px;font-weight:bold;color:#3a4466">Adherence %</div>
  <div class="t" style="left:950px;top:524.9px;font-size:5.65px;font-weight:bold;color:#3a4466">Action</div>
  <div class="t" style="left:542px;top:542.6px;font-size:5.8px;color:#3a4466">Donald Wood</div>
  <div class="a" style="left:298.2px;top:539px;width:0.7px;height:6px;background:#e6e9f0"></div>
</div>
</body></html>
